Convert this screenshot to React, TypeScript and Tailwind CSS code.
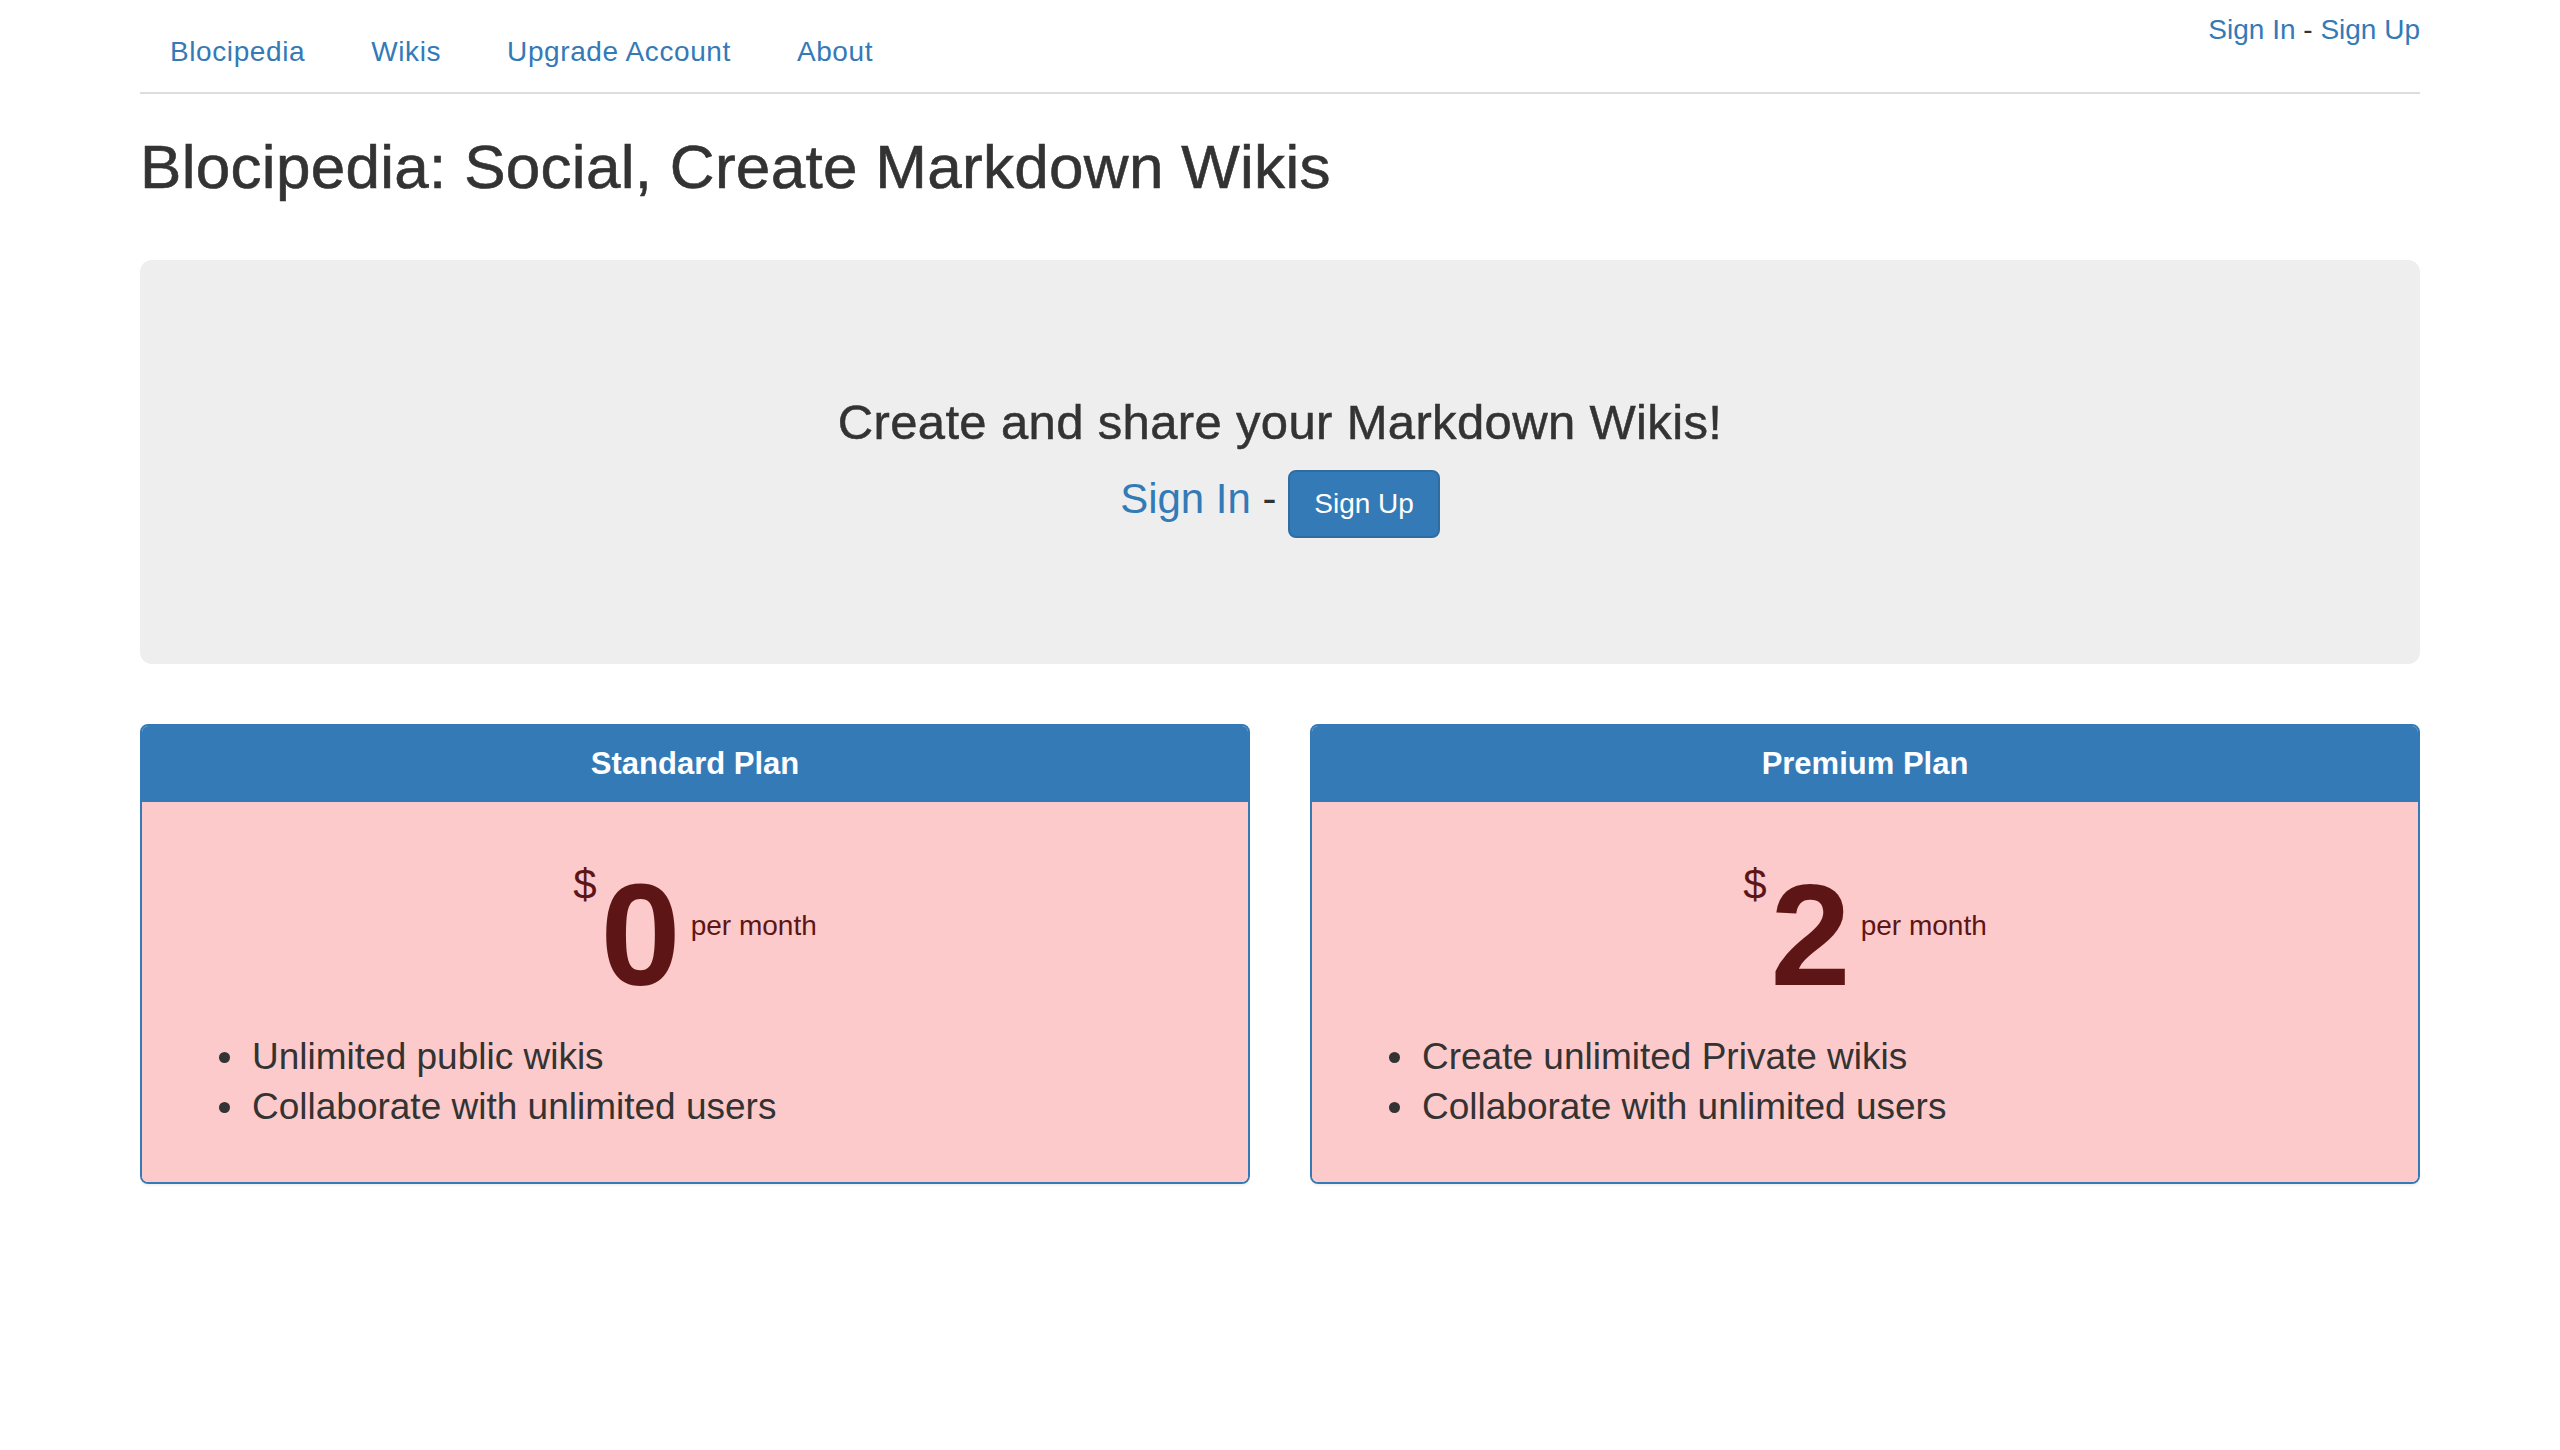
import React from "react";

interface Plan {
  name: string;
  price: string;
  features: string[];
}

const plans: Plan[] = [
  {
    name: "Standard Plan",
    price: "0",
    features: ["Unlimited public wikis", "Collaborate with unlimited users"],
  },
  {
    name: "Premium Plan",
    price: "2",
    features: ["Create unlimited Private wikis", "Collaborate with unlimited users"],
  },
];

const navLinks = ["Blocipedia", "Wikis", "Upgrade Account", "About"];

const PlanCard = ({ plan }: { plan: Plan }) => {
  return (
    <div className="border-2 border-[#337ab7] rounded-[8px] overflow-hidden shadow-[0_2px_2px_rgba(0,0,0,0.05)]">
      <div className="h-[76px] bg-[#337ab7] flex items-center justify-center">
        <h3 className="text-[31px] font-bold text-white leading-[36px]">{plan.name}</h3>
      </div>
      <div className="bg-[#fccaca] px-[30px] pt-[30px] pb-[30px]">
        <div className="mt-[32px] flex justify-center items-start text-[#5e1515]">
          <span className="text-[42px] leading-none mr-[4px]">$</span>
          <span className="text-[144px] font-bold leading-none">{plan.price}</span>
          <span className="text-[28px] leading-none mt-[48px] ml-[10px]">per month</span>
        </div>
        <ul className="mt-[24px] mb-[20px] pl-[76px] list-disc text-[37px] leading-[50px] text-[#333]">
          {plan.features.map((f) => (
            <li key={f} className="pl-[4px]">{f}</li>
          ))}
        </ul>
      </div>
    </div>
  );
};

const App = () => {
  return (
    <div className="min-h-screen bg-white text-[#333] font-['Liberation_Sans',Arial,sans-serif]">
      <div className="w-[2340px] mx-auto px-[30px]">
        <div className="flex items-start justify-between pt-[12px] border-b-2 border-[#ddd]">
          <ul className="flex">
            {navLinks.map((link) => (
              <li key={link} className="mr-[6px]">
                <a href="#" className="block px-[30px] py-[20px] text-[28px] leading-[40px] tracking-[0.6px] text-[#337ab7]">
                  {link}
                </a>
              </li>
            ))}
          </ul>
          <div className="-mt-[2px] text-[28px] leading-[40px]">
            <a href="#" className="text-[#337ab7]">Sign In</a> - <a href="#" className="text-[#337ab7]">Sign Up</a>
          </div>
        </div>

        <h2 className="mt-[40px] text-[62px] leading-[66px] tracking-[0.3px] [-webkit-text-stroke:0.6px_#333]">
          Blocipedia: Social, Create Markdown Wikis
        </h2>

        <div className="mt-[60px] bg-[#eee] rounded-[12px] px-[120px] py-[96px] text-center">
          <h3 className="mt-[40px] mb-[20px] text-[49px] leading-[53px] tracking-[0.35px] [-webkit-text-stroke:0.5px_#333]">
            Create and share your Markdown Wikis!
          </h3>
          <p className="mb-[30px] text-[42px] leading-[60px]">
            <a href="#" className="text-[#337ab7]">Sign In</a> -{" "}
            <button
              type="button"
              className="inline-block align-baseline bg-[#337ab7] border-2 border-[#2e6da4] rounded-[8px] px-[24px] py-[12px] text-[28px] leading-[40px] text-white"
            >
              Sign Up
            </button>
          </p>
        </div>

        <div className="mt-[60px] grid grid-cols-2 gap-[60px]">
          {plans.map((plan) => (
            <PlanCard key={plan.name} plan={plan} />
          ))}
        </div>
      </div>
    </div>
  );
};

export default App;
